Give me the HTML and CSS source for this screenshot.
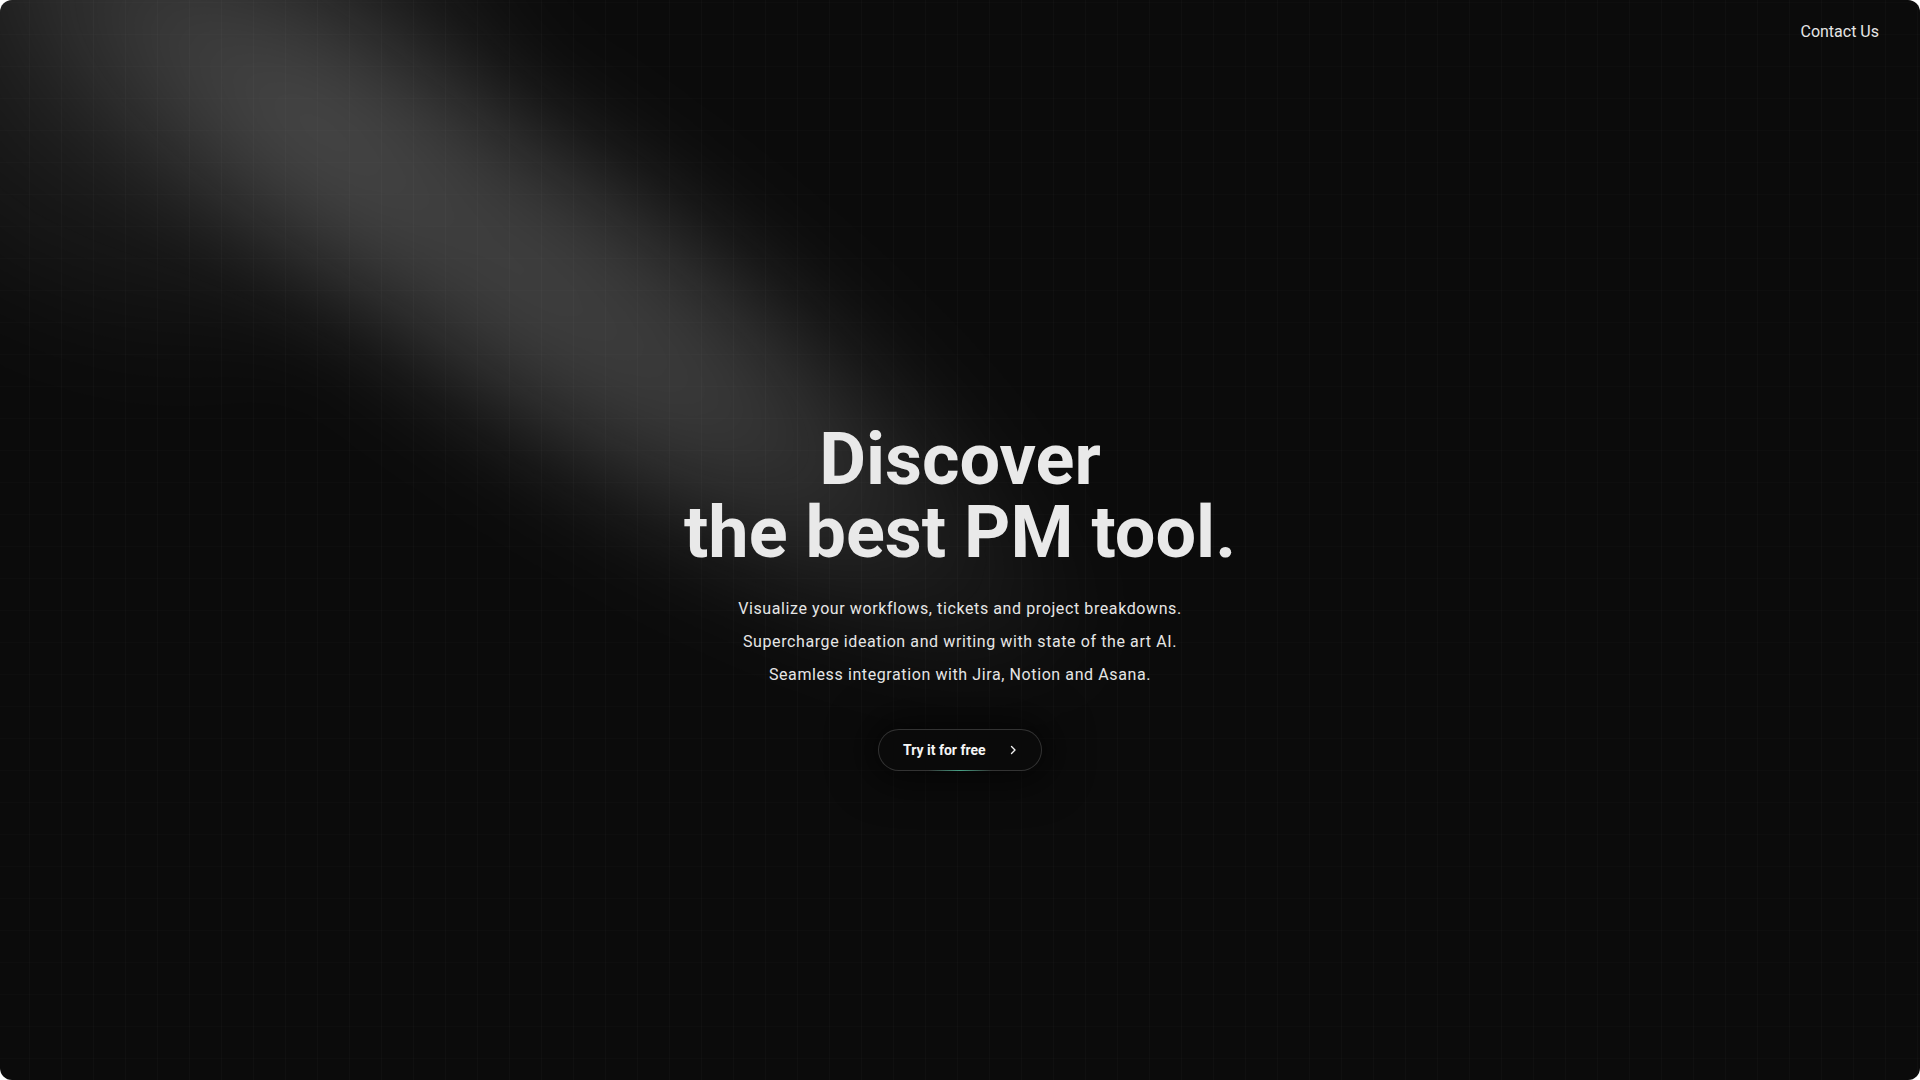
FILE: index.html
```html
<!DOCTYPE html>
<html lang="en">
<head>
<meta charset="utf-8">
<title>Discover the best PM tool.</title>
<link rel="stylesheet" href="styles.css">
</head>
<body>
<div class="page">
  <div class="grid"></div>
  <div class="beam"></div>
  <header class="topbar">
    <a class="contact" href="#">Contact Us</a>
  </header>
  <main class="hero">
    <h1 class="title">Discover<br>the best PM tool.</h1>
    <div class="lead">
      <p>Visualize your workflows, tickets and project breakdowns.</p>
      <p>Supercharge ideation and writing with state of the art AI.</p>
      <p>Seamless integration with Jira, Notion and Asana.</p>
    </div>
    <a class="cta" href="#">
      <span>Try it for free</span>
      <svg class="chev" viewBox="0 0 12 12" width="12" height="12" aria-hidden="true"><path d="M4.5 2.5 L8 6 L4.5 9.5" fill="none" stroke="#f2f2f2" stroke-width="1.4" stroke-linecap="round" stroke-linejoin="round"/></svg>
    </a>
  </main>
</div>
</body>
</html>
```

FILE: styles.css
```css
* { box-sizing: border-box; }
html, body { margin: 0; padding: 0; height: 100%; }
body {
  background: #ffffff;
  font-family: Roboto, "Noto Sans", "Liberation Sans", sans-serif;
  -webkit-font-smoothing: antialiased;
}
.page {
  position: relative;
  height: 100vh;
  overflow: hidden;
  border-radius: 12px;
  background: #0b0b0b;
  display: flex;
  flex-direction: column;
}
.grid {
  position: absolute;
  inset: 0;
  background-image:
    linear-gradient(to right, rgba(255,255,255,0.02) 1px, transparent 1px),
    linear-gradient(to bottom, rgba(255,255,255,0.012) 1px, transparent 1px);
  background-size: 32px 32px;
  background-position: 29px 2px;
  pointer-events: none;
}
.beam {
  position: absolute;
  left: -180px;
  top: 80px;
  width: 1400px;
  height: 380px;
  transform: rotate(35deg);
  transform-origin: center;
  background: radial-gradient(ellipse 50% 50% at 50% 50%, rgba(255,255,255,0.22) 0%, rgba(255,255,255,0.18) 40%, rgba(255,255,255,0.07) 72%, rgba(255,255,255,0) 100%);
  filter: blur(40px);
  pointer-events: none;
}
.beam::before {
  content: "";
  position: absolute;
  left: -150px;
  top: -170px;
  width: 800px;
  height: 720px;
  background: radial-gradient(ellipse 50% 50% at 50% 50%, rgba(255,255,255,0.1) 0%, rgba(255,255,255,0.07) 45%, rgba(255,255,255,0) 100%);
}
.topbar {
  position: relative;
  display: flex;
  justify-content: flex-end;
  padding: 22px 41px 0 0;
  height: 64px;
}
.contact {
  color: #e6e6e6;
  text-decoration: none;
  font-size: 16px;
  line-height: 20px;
}
.hero {
  position: relative;
  display: flex;
  flex-direction: column;
  align-items: center;
  padding-top: 359px;
}
.title {
  margin: 0;
  color: #e9e9e9;
  font-weight: 700;
  font-size: 72px;
  line-height: 73px;
  letter-spacing: 0;
  text-align: center;
}
.lead {
  margin-top: 23px;
  text-align: center;
  color: #e6e6e6;
  font-size: 16px;
  line-height: 33px;
  letter-spacing: 0.6px;
}
.lead p { margin: 0; }
.cta {
  position: relative;
  margin-top: 38px;
  width: 164px;
  height: 42px;
  display: flex;
  align-items: center;
  justify-content: space-between;
  padding: 0 22px 0 24px;
  border-radius: 21px;
  border: 1px solid rgba(255,255,255,0.17);
  background: #0a0a0a;
  box-shadow: 0 0 40px 10px rgba(0,0,0,0.6);
  color: #f5f5f5;
  text-decoration: none;
  font-size: 14px;
  font-weight: 700;
}
.cta::after {
  content: "";
  position: absolute;
  left: 30%;
  right: 30%;
  bottom: -1px;
  height: 1px;
  background: linear-gradient(to right, rgba(60,190,150,0), rgba(80,210,170,0.7), rgba(60,190,150,0));
}
.chev { display: block; }
```
